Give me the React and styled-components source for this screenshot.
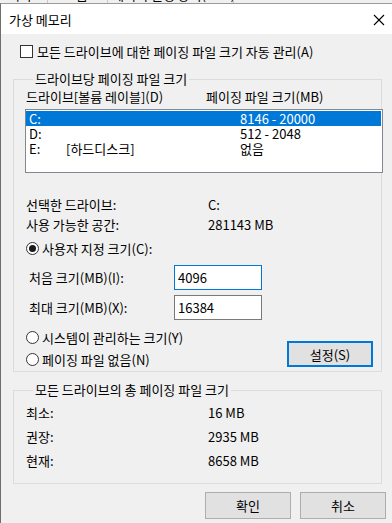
import React from 'react';
import styled, { createGlobalStyle } from 'styled-components';

const GlobalStyle = createGlobalStyle`
  html, body {
    margin: 0;
    padding: 0;
    background: #f0f0f0;
  }
  body {
    font-family: "Noto Sans CJK KR", "Noto Sans", sans-serif;
    font-size: 13px;
    color: #000;
  }
`;

const Screen = styled.div`
  width: 392px;
  height: 523px;
  overflow: hidden;
  display: flex;
  flex-direction: column;
  background: #f0f0f0;
`;

const BackStrip = styled.div`
  height: 3px;
  overflow: hidden;
  background: #f0f0f0;
`;

const BackTabs = styled.div`
  display: flex;
  margin-top: -13px;
  height: 16px;
  line-height: 16px;
`;

const BackTab = styled.span`
  width: ${({ $w }) => $w}px;
  box-sizing: border-box;
  padding-left: ${({ $pad }) => $pad}px;
  border-right: 1px solid #c8c8c8;
  white-space: nowrap;
  overflow: hidden;
`;

const Window = styled.div`
  flex: 1;
  display: flex;
  flex-direction: column;
  border-left: 1px solid #6e6e6e;
  border-top: 1px solid #9a9a9a;
`;

const TitleBar = styled.div`
  height: 30px;
  background: #fff;
  display: flex;
  align-items: center;
  justify-content: space-between;
  padding: 0 7px 0 8px;
`;

const CloseButton = styled.span`
  display: flex;
  width: 12px;
  height: 12px;
  margin-top: 2px;
`;

const Body = styled.div`
  flex: 1;
  padding-left: 12px;
  display: flex;
  flex-direction: column;
`;

const CheckRow = styled.label`
  display: flex;
  align-items: center;
  height: 16px;
  margin: 9px 0 0 7px;
  gap: 4px;
`;

const CheckBox = styled.span`
  width: 13px;
  height: 13px;
  box-sizing: border-box;
  border: 1px solid #333;
  background: #fff;
`;

const Group = styled.fieldset`
  width: 369px;
  box-sizing: border-box;
  margin: ${({ $top }) => $top}px 0 0;
  padding: 0 0 ${({ $bottom }) => $bottom}px 11px;
  border: 1px solid #dcdcdc;
  min-inline-size: 0;
`;

const Legend = styled.legend`
  padding: 0 2px;
  margin-left: 8px;
  line-height: 16px;
`;

const ColumnHeaders = styled.div`
  display: flex;
  margin: 2px 0 0 1px;
  line-height: 16px;
  & > span:first-child {
    width: 180px;
  }
`;

const ListBox = styled.div`
  width: 358px;
  height: 64px;
  box-sizing: border-box;
  margin-top: 4px;
  border: 1px solid #828790;
  background: #fff;
  padding: 1px 1px 0 0;
`;

const ListRow = styled.div`
  display: grid;
  grid-template-columns: 37px 174px 1fr;
  height: 15px;
  line-height: 15px;
  padding-left: 3px;
  background: ${({ $selected }) => ($selected ? '#0078d7' : 'transparent')};
  color: ${({ $selected }) => ($selected ? '#fff' : '#000')};
`;

const InfoGrid = styled.div`
  display: grid;
  grid-template-columns: 182px 1fr;
  grid-auto-rows: 20px;
  row-gap: ${({ $gap }) => $gap || 0}px;
  align-items: center;
  margin-top: ${({ $top }) => $top}px;
  padding-left: 1px;
`;

const RadioRow = styled.label`
  display: flex;
  align-items: center;
  height: 16px;
  gap: 3px;
  margin: ${({ $top }) => $top}px 0 0 1px;
`;

const Radio = styled.span`
  width: 13px;
  height: 13px;
  box-sizing: border-box;
  border: 1px solid #333;
  border-radius: 50%;
  background: #fff;
  display: flex;
  align-items: center;
  justify-content: center;
  &::after {
    content: '';
    width: 7px;
    height: 7px;
    border-radius: 50%;
    background: ${({ $checked }) => ($checked ? '#1a1a1a' : 'transparent')};
  }
`;

const FieldRow = styled.div`
  display: grid;
  grid-template-columns: 149px 88px;
  align-items: center;
  height: 25px;
  margin-top: ${({ $top }) => $top}px;
  & > span {
    padding-left: 4px;
  }
`;

const Input = styled.div`
  height: 25px;
  box-sizing: border-box;
  border: 1px solid ${({ $focused }) => ($focused ? '#0078d7' : '#7a7a7a')};
  background: #fff;
  padding-left: 3px;
  line-height: 23px;
`;

const OptionsRow = styled.div`
  display: flex;
  align-items: flex-end;
  justify-content: space-between;
  padding-right: 8px;
`;

const RadioColumn = styled.div`
  display: flex;
  flex-direction: column;
`;

const Button = styled.button`
  width: ${({ $w }) => $w}px;
  height: ${({ $h }) => $h}px;
  box-sizing: border-box;
  background: #e1e1e1;
  border: ${({ $default }) => ($default ? '2px solid #0078d7' : '1px solid #adadad')};
  font: inherit;
  color: #000;
  padding: 0;
  margin: 0;
`;

const ButtonRow = styled.div`
  display: flex;
  justify-content: flex-end;
  gap: 9px;
  margin-top: 8px;
  padding-right: 6px;
`;

const CloseIcon = () => (
  <svg width="12" height="12" viewBox="0 0 12 12">
    <path d="M1 1 L11 11 M11 1 L1 11" stroke="#000" strokeWidth="1.1" fill="none" />
  </svg>
);

const drives = [
  { name: 'C:', label: '', size: '8146 - 20000', selected: true },
  { name: 'D:', label: '', size: '512 - 2048' },
  { name: 'E:', label: '[하드디스크]', size: '없음' },
];

const totals = [
  ['최소:', '16 MB'],
  ['권장:', '2935 MB'],
  ['현재:', '8658 MB'],
];

export default function App() {
  return (
    <Screen>
      <GlobalStyle />
      <BackStrip>
        <BackTabs>
          <BackTab $w={48} $pad={8}>시각 효과</BackTab>
          <BackTab $w={60} $pad={16}>고급</BackTab>
          <BackTab $w={126} $pad={4}>데이터 실행 방지(DEP)</BackTab>
        </BackTabs>
      </BackStrip>
      <Window>
        <TitleBar>
          <span>가상 메모리</span>
          <CloseButton>
            <CloseIcon />
          </CloseButton>
        </TitleBar>
        <Body>
          <CheckRow>
            <CheckBox />
            <span>모든 드라이브에 대한 페이징 파일 크기 자동 관리(A)</span>
          </CheckRow>

          <Group $top={12} $bottom={4}>
            <Legend>드라이브당 페이징 파일 크기</Legend>
            <ColumnHeaders>
              <span>드라이브[볼륨 레이블](D)</span>
              <span>페이징 파일 크기(MB)</span>
            </ColumnHeaders>
            <ListBox>
              {drives.map((d) => (
                <ListRow key={d.name} $selected={d.selected}>
                  <span>{d.name}</span>
                  <span>{d.label}</span>
                  <span>{d.size}</span>
                </ListRow>
              ))}
            </ListBox>
            <InfoGrid $top={21}>
              <span>선택한 드라이브:</span>
              <span>C:</span>
              <span>사용 가능한 공간:</span>
              <span>281143 MB</span>
            </InfoGrid>
            <RadioRow $top={6}>
              <Radio $checked />
              <span>사용자 지정 크기(C):</span>
            </RadioRow>
            <FieldRow $top={9}>
              <span>처음 크기(MB)(I):</span>
              <Input $focused>4096</Input>
            </FieldRow>
            <FieldRow $top={5}>
              <span>최대 크기(MB)(X):</span>
              <Input>16384</Input>
            </FieldRow>
            <OptionsRow>
              <RadioColumn>
                <RadioRow $top={9}>
                  <Radio />
                  <span>시스템이 관리하는 크기(Y)</span>
                </RadioRow>
                <RadioRow $top={6}>
                  <Radio />
                  <span>페이징 파일 없음(N)</span>
                </RadioRow>
              </RadioColumn>
              <Button $w={86} $h={26} $default>
                설정(S)
              </Button>
            </OptionsRow>
          </Group>

          <Group $top={10} $bottom={13}>
            <Legend>모든 드라이브의 총 페이징 파일 크기</Legend>
            <InfoGrid $top={4} $gap={4}>
              {totals.map(([k, v]) => (
                <React.Fragment key={k}>
                  <span>{k}</span>
                  <span>{v}</span>
                </React.Fragment>
              ))}
            </InfoGrid>
          </Group>

          <ButtonRow>
            <Button $w={86} $h={27}>확인</Button>
            <Button $w={86} $h={27}>취소</Button>
          </ButtonRow>
        </Body>
      </Window>
    </Screen>
  );
}
